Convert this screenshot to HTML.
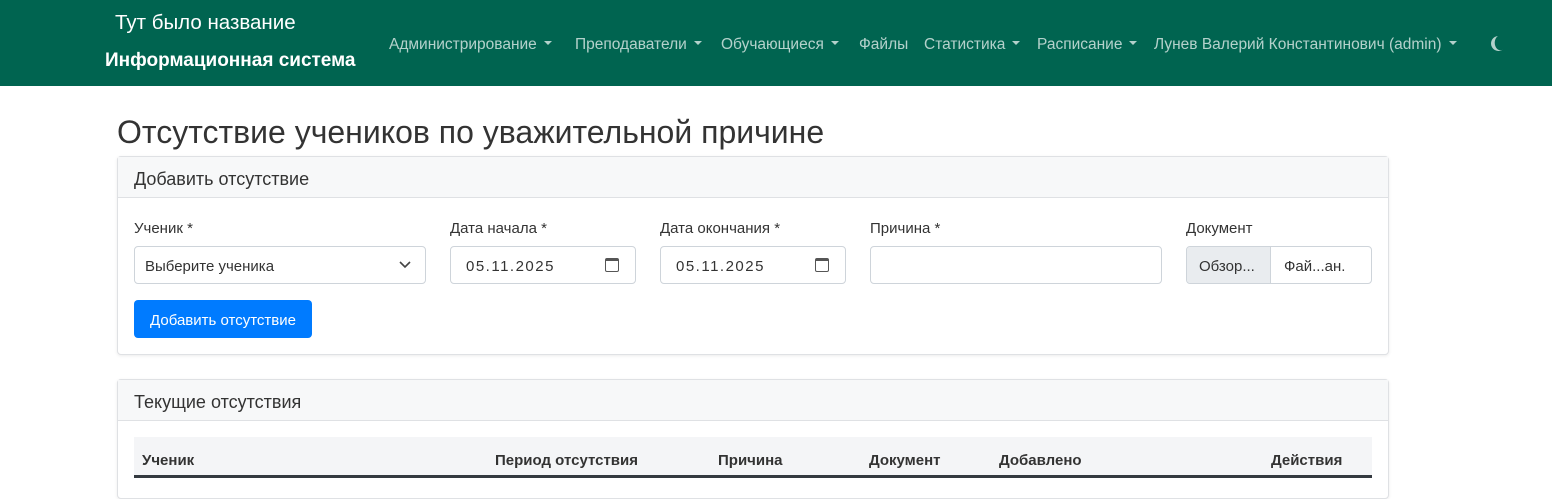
<!DOCTYPE html>
<html><head><meta charset="utf-8"><style>
*{box-sizing:border-box;margin:0;padding:0}
body{width:1552px;height:481px;overflow:hidden;background:#fff;font-family:"Liberation Sans",sans-serif;color:#212529;position:relative}
.a{position:absolute;white-space:nowrap}
.nav{position:absolute;left:0;top:0;width:1552px;height:86px;background:#006450}
.ni{position:absolute;top:36px;font-size:15.5px;color:rgba(255,255,255,.7)}
.car{display:inline-block;width:0;height:0;border-left:4px solid transparent;border-right:4px solid transparent;border-top:4px solid rgba(255,255,255,.7);vertical-align:4px;margin-left:7px}
.card{position:absolute;left:117px;width:1272px;border:1px solid #dfe1e4;border-radius:4px;box-shadow:0 1px 3px rgba(0,0,0,.08);background:#fff}
.ch{height:41px;background:#f7f8f9;border-bottom:1px solid #dfe1e4;font-size:18px;padding:12px 16px 0;color:#333}
.lbl{font-size:15px;top:220px;color:#333}
.inp{position:absolute;top:246px;height:38px;border:1px solid #ced4da;border-radius:4px;background:#fff;font-size:15px;padding:11px 15px 0;color:#333}
.cal{position:absolute;right:16px;top:11px;width:14px;height:14px;border:1.5px solid #555;border-top-width:3px;border-radius:2px}
.th{position:absolute;top:452px;font-size:15px;font-weight:bold;color:#333}
</style></head><body>
<div class="nav">
<div class="a" style="left:115px;top:11px;font-size:20.5px;color:#fff">Тут было название</div>
<div class="a" style="left:105px;top:50px;font-size:19px;font-weight:bold;color:#fff">Информационная система</div>
<div class="a ni" style="left:389px">Администрирование<span class="car"></span></div>
<div class="a ni" style="left:575px">Преподаватели<span class="car"></span></div>
<div class="a ni" style="left:721px">Обучающиеся<span class="car"></span></div>
<div class="a ni" style="left:859px">Файлы</div>
<div class="a ni" style="left:924px">Статистика<span class="car"></span></div>
<div class="a ni" style="left:1037px">Расписание<span class="car"></span></div>
<div class="a ni" style="left:1154px">Лунев Валерий Константинович (admin)<span class="car"></span></div>
<svg class="a" style="left:1489px;top:35px" width="16" height="17" viewBox="0 0 16 17"><path d="M9 1A7.5 7.5 0 1 0 14 14.5A5 6.5 0 0 1 9 1Z" fill="rgba(255,255,255,.7)"/></svg>
</div>
<div class="a" style="left:117px;top:114px;font-size:32px;color:#333">Отсутствие учеников по уважительной причине</div>
<div class="card" style="top:156px;height:199px"><div class="ch">Добавить отсутствие</div></div>
<div class="a lbl" style="left:134px">Ученик *</div>
<div class="a lbl" style="left:450px">Дата начала *</div>
<div class="a lbl" style="left:660px">Дата окончания *</div>
<div class="a lbl" style="left:870px">Причина *</div>
<div class="a lbl" style="left:1186px">Документ</div>
<div class="inp" style="left:134px;width:292px;padding-left:10px">Выберите ученика<svg style="position:absolute;right:14px;top:14px" width="12" height="8" viewBox="0 0 12 8"><path d="M1 1l5 5 5-5" stroke="#444" stroke-width="1.6" fill="none"/></svg></div>
<div class="inp" style="left:450px;width:186px;letter-spacing:1.5px">05.11.2025<span class="cal"></span></div>
<div class="inp" style="left:660px;width:186px;letter-spacing:1.5px">05.11.2025<span class="cal"></span></div>
<div class="inp" style="left:870px;width:292px"></div>
<div class="inp" style="left:1186px;width:186px;padding:0;overflow:hidden"><span style="position:absolute;left:0;top:0;width:84px;height:36px;background:#e9ecef;border-right:1px solid #ced4da;padding:11px 12px 0">Обзор...</span><span style="position:absolute;left:97px;top:11px">Фай...ан.</span></div>
<div class="a" style="left:134px;top:300px;width:178px;height:38px;background:#007bff;border-radius:4px;color:#fff;font-size:15px;padding:12px 0 0;text-align:center">Добавить отсутствие</div>
<div class="card" style="top:379px;height:120px"><div class="ch">Текущие отсутствия</div></div>
<div class="a" style="left:134px;top:437px;width:1238px;height:41px;background:#f4f5f7;border-bottom:3px solid #343a40"></div>
<div class="th" style="left:142px">Ученик</div>
<div class="th" style="left:495px">Период отсутствия</div>
<div class="th" style="left:718px">Причина</div>
<div class="th" style="left:869px">Документ</div>
<div class="th" style="left:999px">Добавлено</div>
<div class="th" style="left:1271px">Действия</div>
</body></html>
